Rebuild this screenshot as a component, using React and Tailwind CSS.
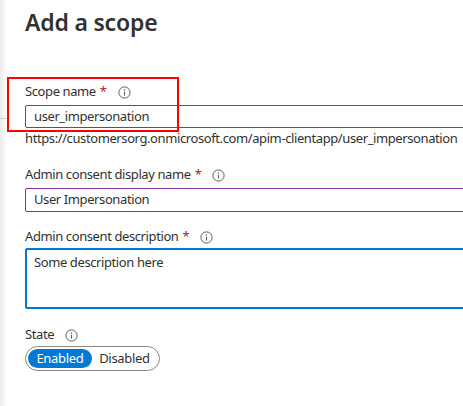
import React from 'react';

function InfoIcon() {
  return (
    <svg width="13" height="13" viewBox="0 0 13 13" className="shrink-0">
      <circle cx="6.5" cy="6.5" r="5.6" fill="none" stroke="#605e5c" strokeWidth="1" />
      <circle cx="6.5" cy="4" r="0.75" fill="#605e5c" />
      <path d="M6.5 5.8 V9.6" stroke="#605e5c" strokeWidth="1.1" />
    </svg>
  );
}

function Label({ text, required }) {
  return (
    <div className="flex items-center h-[18px] text-[13px] tracking-[-0.4px] text-[#323130]">
      <span>{text}</span>
      {required && <span className="ml-[4px] text-[#a4262c]">*</span>}
      <span className="ml-[11px] flex items-center">
        <InfoIcon />
      </span>
    </div>
  );
}

export default function App() {
  return (
    <div
      className="flex w-[463px] h-[406px] overflow-hidden bg-white"
      style={{ fontFamily: '"Segoe UI", "Noto Sans", "Open Sans", sans-serif' }}
    >
      {/* left shadow strip */}
      <div className="w-[6px] shrink-0 bg-gradient-to-r from-[#ececec] to-[#fafafa]">
        <div className="mt-[118px] h-px bg-[#d0d0d0]" />
      </div>

      <main className="flex-1 min-w-0 pl-[19px]">
        <h1 className="mt-[7px] h-[30px] text-[23px] font-semibold text-[#323130] leading-[30px] tracking-[-0.2px]">
          Add a scope
        </h1>

        {/* Scope name */}
        <div className="relative mt-[46px]">
          <div className="absolute left-[-18px] top-[-6px] w-[172px] h-[55px] border-2 border-[#ff0000] pointer-events-none" />
          <Label text="Scope name" required />
          <div className="mt-[4px] w-[480px] h-[23px] border border-[#8a2da6] rounded-[2px] flex items-center pl-[8px] text-[13px] tracking-[-0.4px] text-[#323130]">
            user_impersonation
          </div>
        </div>
        <p className="mt-[1px] text-[13px] leading-[18px] tracking-[-0.4px] text-[#323130] whitespace-nowrap">
          https://customersorg.onmicrosoft.com/apim-clientapp/user_impersonation
        </p>

        {/* Display name */}
        <div className="mt-[19px]">
          <Label text="Admin consent display name" required />
          <div className="mt-[4px] w-[480px] h-[24px] border border-[#8a2da6] rounded-[2px] flex items-center pl-[8px] text-[13px] tracking-[-0.4px] text-[#323130]">
            User Impersonation
          </div>
        </div>

        {/* Description */}
        <div className="mt-[16px]">
          <Label text="Admin consent description" required />
          <div className="mt-[2px] w-[480px] h-[61px] border-2 border-[#0078d4] rounded-[2px] pl-[7px] pt-[3px] text-[13px] leading-[18px] tracking-[-0.4px] text-[#323130]">
            Some description here
          </div>
        </div>

        {/* State */}
        <div className="mt-[17px]">
          <Label text="State" />
          <div className="mt-[2px] inline-flex items-center w-[135px] h-[25px] border border-[#8a8886] rounded-full p-[2px] text-[13px] tracking-[-0.3px]">
            <span className="flex items-center justify-center w-[64px] h-[19px] rounded-full bg-[#0078d4] text-white">
              Enabled
            </span>
            <span className="flex-1 text-center text-[#323130]">Disabled</span>
          </div>
        </div>
      </main>
    </div>
  );
}
